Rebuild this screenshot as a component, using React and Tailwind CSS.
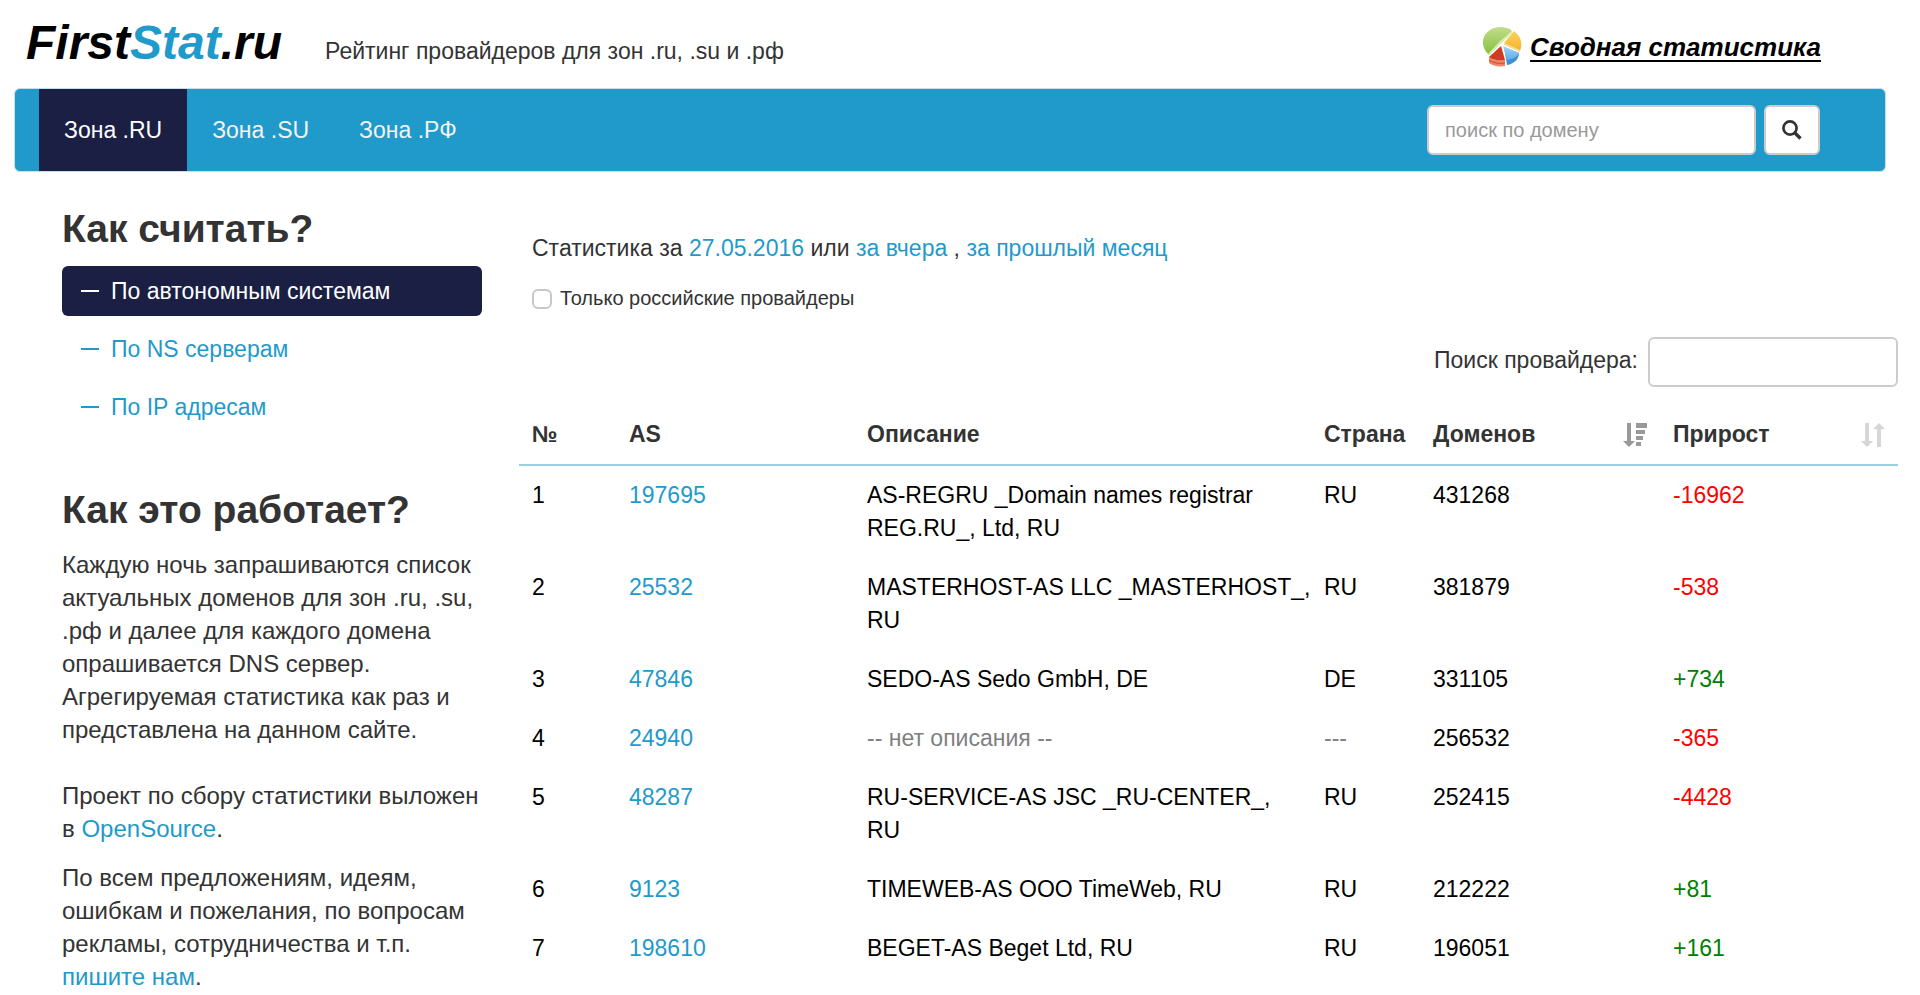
const zones = ["Зона .RU", "Зона .SU", "Зона .РФ"];

const methods = ["По автономным системам", "По NS серверам", "По IP адресам"];

const rows = [
  { as: "197695", name: "AS-REGRU _Domain names registrar\nREG.RU_, Ltd, RU", country: "RU", domains: 431268, growth: -16962 },
  { as: "25532", name: "MASTERHOST-AS LLC _MASTERHOST_,\nRU", country: "RU", domains: 381879, growth: -538 },
  { as: "47846", name: "SEDO-AS Sedo GmbH, DE", country: "DE", domains: 331105, growth: 734 },
  { as: "24940", name: null, country: null, domains: 256532, growth: -365 },
  { as: "48287", name: "RU-SERVICE-AS JSC _RU-CENTER_,\nRU", country: "RU", domains: 252415, growth: -4428 },
  { as: "9123", name: "TIMEWEB-AS OOO TimeWeb, RU", country: "RU", domains: 212222, growth: 81 },
  { as: "198610", name: "BEGET-AS Beget Ltd, RU", country: "RU", domains: 196051, growth: 161 },
];

function PieIcon() {
  return (
    <svg viewBox="0 0 40 40" className="size-10" aria-hidden="true">
      <defs>
        <linearGradient id="green" x1="0" y1="0" x2="0" y2="1">
          <stop offset="0" stopColor="#c3dc8c" />
          <stop offset="1" stopColor="#83c13c" />
        </linearGradient>
        <linearGradient id="yellow" x1="0" y1="0" x2="0" y2="1">
          <stop offset="0" stopColor="#fbd25f" />
          <stop offset="1" stopColor="#f5b32c" />
        </linearGradient>
        <linearGradient id="blue" x1="0" y1="0" x2="0" y2="1">
          <stop offset="0" stopColor="#a5d5f7" />
          <stop offset="1" stopColor="#5fade8" />
        </linearGradient>
      </defs>
      <path d="M6 27C-4 17 1 1 18 0c5 0 9 1 12 4L7 28z" fill="url(#green)" />
      <path d="M30 4v2L7 28l-1-1 12-13z" fill="#d5edb0" />
      <path d="M32 4c7 5 9 13 6 20L22 16z" fill="url(#yellow)" />
      <path d="M22 16l16 7v2l-16-7z" fill="#f9dc92" />
      <path d="M22 20l3 18c7-1 12-6 12-12z" fill="#3f8fd3" />
      <path d="M21 19l16 7c-2 4-6 6-12 7z" fill="url(#blue)" />
      <path d="M7 30c4 3 10 4 16 3v6c-6 1-12 0-16-3z" fill="#ef8365" />
      <path d="M7 33c4 3 10 4 16 3" fill="none" stroke="#d4452a" />
      <path d="M19 19L7 30c4 3 10 4 16 3z" fill="#cf3a22" />
    </svg>
  );
}

function SearchIcon() {
  return (
    <svg viewBox="0 0 20 20" className="size-5" fill="none" stroke="#333" aria-hidden="true">
      <circle cx="8" cy="8" r="6.6" strokeWidth="2.7" />
      <path d="M13 13l5.5 5.5" strokeWidth="3.4" />
    </svg>
  );
}

function SortDescIcon() {
  return (
    <svg viewBox="0 0 24 24" className="size-6 shrink-0" fill="#999" aria-hidden="true">
      <path d="M4 0h4v18h4L6 24 0 18h4z" />
      <path d="M13 0h11v5H13zM13 7h9v4h-9zM13 13h7v4h-7zM13 19h5v4h-5z" />
    </svg>
  );
}

function SortIcon() {
  return (
    <svg viewBox="0 0 24 24" className="size-6 shrink-0" fill="#d6d6d6" aria-hidden="true">
      <path d="M4 0h4v18h4L6 24 0 18h4z" />
      <path d="M16 24h4V6h4L18 0l-6 6h4z" />
    </svg>
  );
}

function Link({ children }) {
  return (
    <a href="#" className="text-[#1f9acb]">
      {children}
    </a>
  );
}

function Header() {
  return (
    <header className="flex h-[88px] items-start justify-between pr-[99px] pl-[26px]">
      <div className="flex items-baseline gap-[43px] pt-[15px]">
        <a href="#" className="text-5xl leading-[56px] font-bold text-black italic">
          First<span className="text-[#1f9acb]">Stat</span>.ru
        </a>
        <p>Рейтинг провайдеров для зон .ru, .su и .рф</p>
      </div>
      <a href="#" className="flex items-center gap-2 pt-[27px] text-black">
        <PieIcon />
        <span className="text-[26px] font-bold italic underline underline-offset-4">Сводная статистика</span>
      </a>
    </header>
  );
}

function Navbar() {
  return (
    <nav className="mr-[34px] ml-3.5 flex h-[84px] justify-between rounded-md border border-[#c9dfe8] bg-[#1f9acb] pr-[65px] pl-6">
      <div className="flex">
        {zones.map((zone, i) => (
          <a
            key={zone}
            href="#"
            className={
              i === 0
                ? "flex items-center bg-[#1a1f43] px-[25px] text-white"
                : "flex items-center px-[25px] text-[#f3f3f3]"
            }
          >
            {zone}
          </a>
        ))}
      </div>
      <form className="flex items-center gap-2">
        <input
          type="text"
          aria-label="поиск по домену"
          placeholder="поиск по домену"
          className="h-[50px] w-[329px] rounded-md border-2 border-[#ccc] bg-white px-4 text-xl placeholder:text-[#999]"
        />
        <button type="button" aria-label="Найти" className="flex h-[50px] w-14 items-center justify-center rounded-md border-2 border-[#ccc] bg-white">
          <SearchIcon />
        </button>
      </form>
    </nav>
  );
}

function Sidebar() {
  return (
    <aside className="w-[420px] shrink-0">
      <h2 className="pt-[3px] text-[39px] leading-[44px] font-bold">Как считать?</h2>
      <ul className="mt-[15px] flex flex-col gap-2">
        {methods.map((method, i) => (
          <li key={method}>
            <a
              href="#"
              className={
                i === 0
                  ? "flex h-[50px] items-center gap-3 rounded-md bg-[#1a1f43] px-[19px] text-white"
                  : "flex h-[50px] items-center gap-3 px-[19px] text-[#1f9acb]"
              }
            >
              <span className="h-0.5 w-[18px] bg-current" />
              {method}
            </a>
          </li>
        ))}
      </ul>
      <h2 className="mt-14 text-[39px] leading-[44px] font-bold">Как это работает?</h2>
      <div className="mt-4 flex flex-col gap-4 text-2xl leading-[33px]">
        <p>
          Каждую ночь запрашиваются список актуальных доменов для зон .ru, .su, .рф и далее для каждого домена
          опрашивается DNS сервер. Агрегируемая статистика как раз и представлена на данном сайте.
          <br />
          <br />
          Проект по сбору статистики выложен в <Link>OpenSource</Link>.
        </p>
        <p>
          По всем предложениям, идеям, ошибкам и пожелания, по вопросам рекламы, сотрудничества и т.п.
          <br />
          <Link>пишите нам</Link>.
        </p>
      </div>
    </aside>
  );
}

function ProviderTable() {
  return (
    <table className="mt-[18px] w-full table-fixed text-left">
      <thead className="border-b-2 border-[#9dcde2]">
        <tr className="h-[60px]">
          <th className="w-[97px] px-[13px]">№</th>
          <th className="w-[238px] px-[13px]">AS</th>
          <th className="px-[13px]">Описание</th>
          <th className="w-[109px] pl-[13px]">Страна</th>
          <th className="w-[240px] px-[13px]">
            <div className="flex items-center justify-between">
              Доменов <SortDescIcon />
            </div>
          </th>
          <th className="w-[238px] px-[13px]">
            <div className="flex items-center justify-between">
              Прирост <SortIcon />
            </div>
          </th>
        </tr>
      </thead>
      <tbody className="text-black">
        {rows.map((row, i) => (
          <tr key={row.as} className="align-top">
            <td className="p-[13px]">{i + 1}</td>
            <td className="p-[13px]">
              <Link>{row.as}</Link>
            </td>
            <td className={row.name ? "py-[13px] pl-[13px] whitespace-pre" : "py-[13px] pl-[13px] text-[#808080]"}>
              {row.name || "-- нет описания --"}
            </td>
            <td className={row.country ? "p-[13px]" : "p-[13px] text-[#808080]"}>{row.country || "---"}</td>
            <td className="p-[13px]">{row.domains}</td>
            <td className={row.growth > 0 ? "p-[13px] text-[#008000]" : "p-[13px] text-[#ff0000]"}>
              {row.growth > 0 ? `+${row.growth}` : row.growth}
            </td>
          </tr>
        ))}
      </tbody>
    </table>
  );
}

function Stats() {
  return (
    <main className="min-w-0 flex-1">
      <div className="px-[13px] pt-7">
        <p>
          Статистика за <Link>27.05.2016</Link> или <Link>за вчера</Link> , <Link>за прошлый месяц</Link>
        </p>
        <label className="mt-[17px] flex items-center gap-2 text-xl leading-[33px]">
          <input type="checkbox" className="size-5 appearance-none rounded-md border-2 border-[#c8c8c8] bg-white" />
          Только российские провайдеры
        </label>
      </div>
      <div className="mt-[22px] flex items-center justify-end gap-2.5">
        <label htmlFor="provider" className="pb-1">
          Поиск провайдера:
        </label>
        <input
          id="provider"
          type="search"
          className="h-[50px] w-[250px] rounded-md border-2 border-[#ccc] bg-white px-4 text-xl"
        />
      </div>
      <ProviderTable />
    </main>
  );
}

export default function App() {
  return (
    <div className="bg-white font-['Liberation_Sans',sans-serif] text-[23px] leading-[33px] text-[#333]">
      <Header />
      <Navbar />
      <div className="flex gap-[37px] pt-8 pr-[22px] pl-[62px]">
        <Sidebar />
        <Stats />
      </div>
    </div>
  );
}
